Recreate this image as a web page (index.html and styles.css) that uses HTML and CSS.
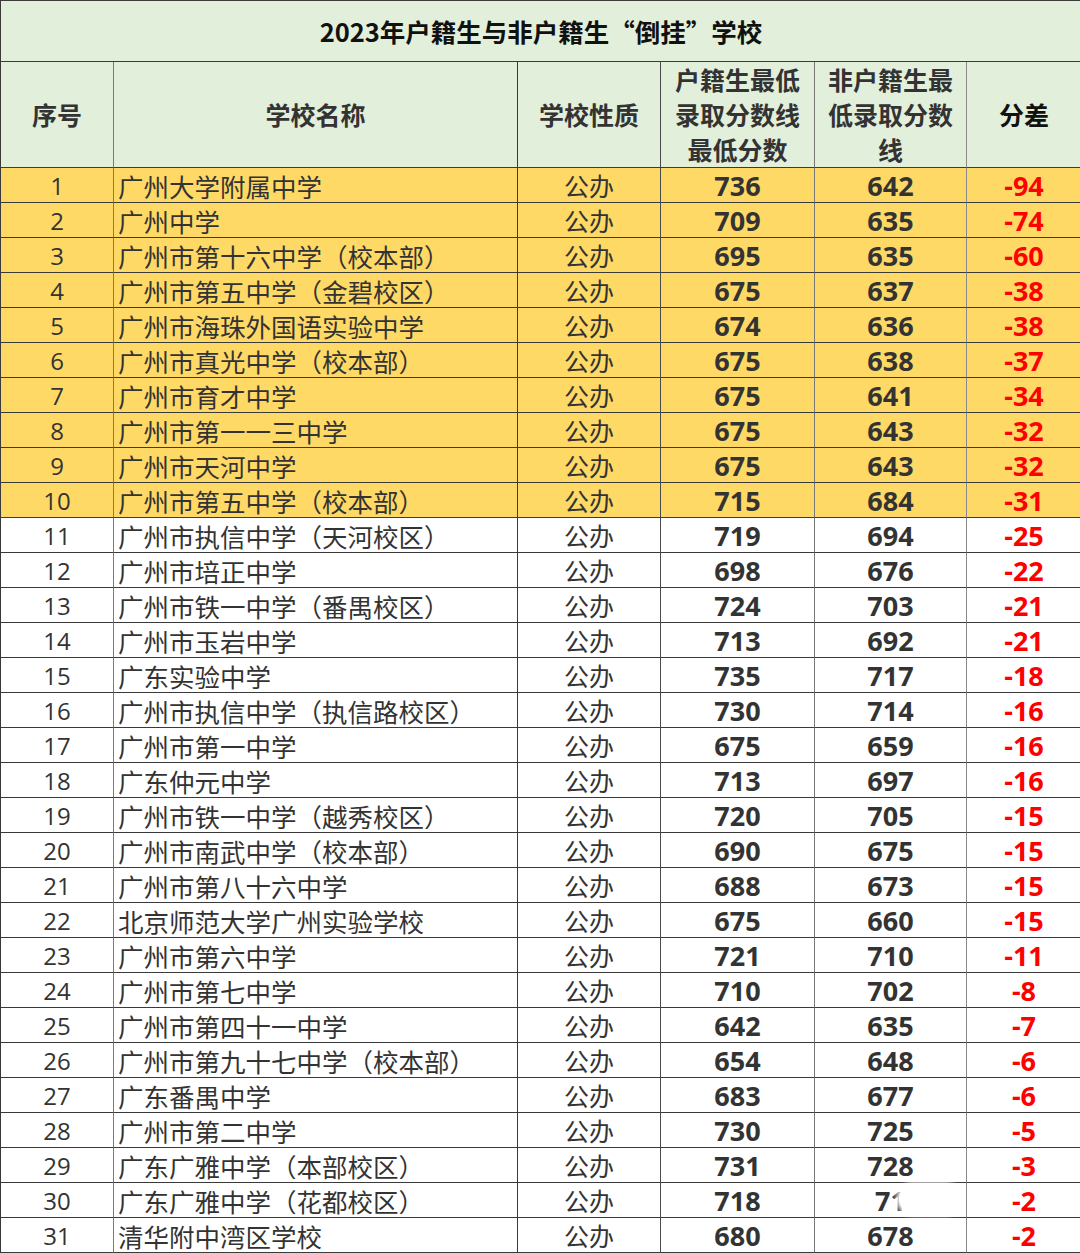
FILE: index.html
```html
<!DOCTYPE html>
<html lang="zh-CN">
<head>
<meta charset="utf-8">
<title>2023年户籍生与非户籍生“倒挂”学校</title>
<link rel="stylesheet" href="styles.css">
</head>
<body>
<div class="sheet">
  <div class="cell title">2023年户籍生与非户籍生“倒挂”学校</div>

  <div class="cell head c1">序号</div>
  <div class="cell head c2">学校名称</div>
  <div class="cell head c3">学校性质</div>
  <div class="cell head c4">户籍生最低<br>录取分数线<br>最低分数</div>
  <div class="cell head c5">非户籍生最<br>低录取分数<br>线</div>
  <div class="cell head c6 black">分差</div>
</div>
<div class="sheet rows" id="rows"></div>
<script src="app.js"></script>
</body>
</html>
```

FILE: app.js
```js
const data = [
["广州大学附属中学",736,642],
["广州中学",709,635],
["广州市第十六中学（校本部）",695,635],
["广州市第五中学（金碧校区）",675,637],
["广州市海珠外国语实验中学",674,636],
["广州市真光中学（校本部）",675,638],
["广州市育才中学",675,641],
["广州市第一一三中学",675,643],
["广州市天河中学",675,643],
["广州市第五中学（校本部）",715,684],
["广州市执信中学（天河校区）",719,694],
["广州市培正中学",698,676],
["广州市铁一中学（番禺校区）",724,703],
["广州市玉岩中学",713,692],
["广东实验中学",735,717],
["广州市执信中学（执信路校区）",730,714],
["广州市第一中学",675,659],
["广东仲元中学",713,697],
["广州市铁一中学（越秀校区）",720,705],
["广州市南武中学（校本部）",690,675],
["广州市第八十六中学",688,673],
["北京师范大学广州实验学校",675,660],
["广州市第六中学",721,710],
["广州市第七中学",710,702],
["广州市第四十一中学",642,635],
["广州市第九十七中学（校本部）",654,648],
["广东番禺中学",683,677],
["广州市第二中学",730,725],
["广东广雅中学（本部校区）",731,728],
["广东广雅中学（花都校区）",718,null],
["清华附中湾区学校",680,678]
];
const diffs=[-94,-74,-60,-38,-38,-37,-34,-32,-32,-31,-25,-22,-21,-21,-18,-16,-16,-16,-15,-15,-15,-15,-11,-8,-7,-6,-6,-5,-3,-2,-2];
const root=document.getElementById('rows');
data.forEach((r,i)=>{
  const hl = i<10 ? ' hl' : '';
  const b = r[2]===null ? '71<span class="smudge"></span>' : r[2];
  root.insertAdjacentHTML('beforeend',
    `<div class="cell c1 idx${hl}">${i+1}</div>`+
    `<div class="cell c2 name${hl}">${r[0]}</div>`+
    `<div class="cell c3 kind${hl}">公办</div>`+
    `<div class="cell c4 num${hl}">${r[1]}</div>`+
    `<div class="cell c5 num${hl}">${b}</div>`+
    `<div class="cell c6 num red${hl}">${diffs[i]}</div>`);
});
```

FILE: styles.css
```css
* { box-sizing: border-box; }
html, body { margin: 0; padding: 0; background: #ffffff; }
body {
  font-family: "Open Sans", "Noto Sans CJK SC", sans-serif;
  color: #333333;
}
.sheet {
  width: 1080px;
  display: grid;
  grid-template-columns: 113px 404px 143px 154px 152px 114px;
  border-left: 1px solid #3a3a3a;
}
.sheet:first-child { border-top: 1px solid #3a3a3a; }
.cell {
  border-bottom: 1px solid #3a3a3a;
  display: flex;
  align-items: center;
  justify-content: center;
  position: relative;
}
.c1 { border-right: 1px solid #7a7a7a; }
.c2 { border-right: 1px solid #3a3a3a; }
.c3 { border-right: 1px solid #4a4a4a; }
.c4 { border-right: 1px solid #777777; }
.c5 { border-right: 1px solid #8a8a8a; }
.title {
  grid-column: 1 / -1;
  height: 61px;
  background: #e2efda;
  font-family: "Noto Sans CJK SC", sans-serif;
  font-weight: 700;
  font-size: 25.5px;
  color: #111111;
  padding-bottom: 2px;
}
.head {
  height: 106px;
  background: #e2efda;
  font-family: "Noto Sans CJK SC", sans-serif;
  font-weight: 700;
  font-size: 25px;
  line-height: 35px;
  text-align: center;
  color: #333333;
}
.head.black { color: #111111; }
.rows .cell { height: 35px; }
.hl { background: #ffd966; }
.idx { font-size: 24px; font-weight: 400; }
.name {
  justify-content: flex-start;
  padding-left: 4px;
  font-family: "Noto Sans CJK SC", sans-serif;
  font-size: 25.5px;
  white-space: nowrap;
}
.kind {
  font-family: "Noto Sans CJK SC", sans-serif;
  font-size: 25px;
}
.num { font-size: 27px; font-weight: 700; }
.red { color: #ff0000; }
.smudge {
  position: absolute;
  left: 84px;
  top: 2px;
  width: 60px;
  height: 28px;
  background: #ffffff;
  border-radius: 14px;
  box-shadow: 0 0 4px 3px rgba(255,255,255,0.9);
}
```
